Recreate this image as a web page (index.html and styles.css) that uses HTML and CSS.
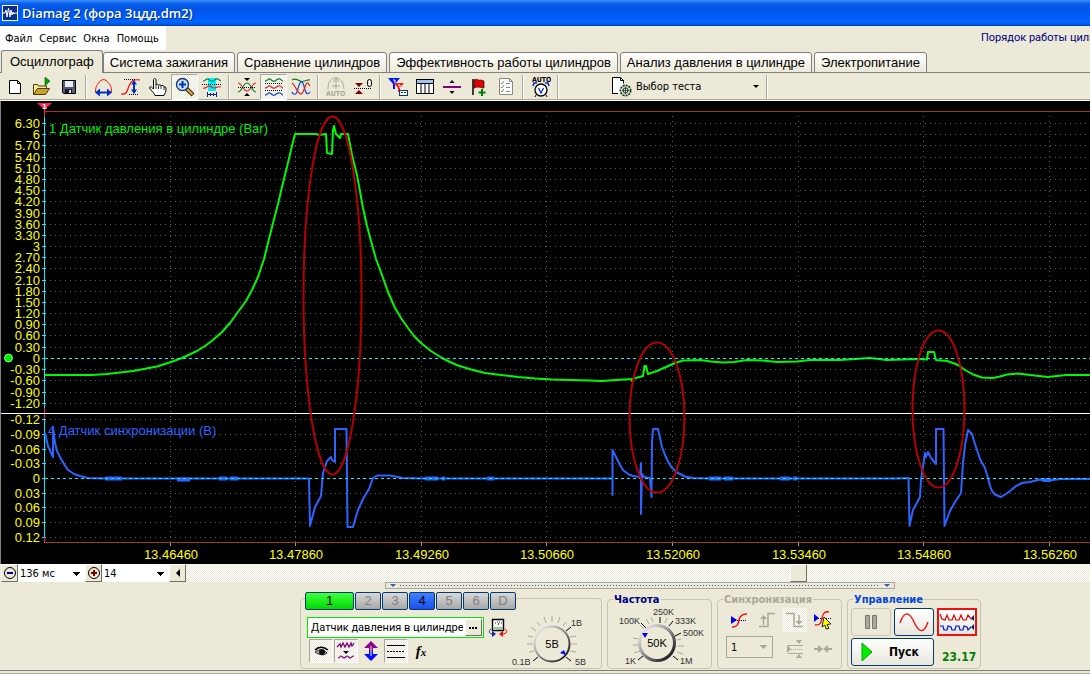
FILE: index.html
```html
<!DOCTYPE html>
<html lang="ru">
<head>
<meta charset="utf-8">
<title>Diamag 2 (фора 3цдд.dm2)</title>
<link rel="stylesheet" href="styles.css">
</head>
<body>
<div class="window">
  <header class="titlebar">
    <svg class="app-icon" width="16" height="16" viewBox="0 0 16 16"><rect width="16" height="16" fill="#fff"/><rect x="1" y="1" width="14" height="14" fill="#0a2f8c"/><path d="M1 8h2l1-3 1 7 1.500-9 1.500 9 1-7 1 5 1-3 1 2 1-1h2" fill="none" stroke="#fff"/></svg>
    <h1 class="title">Diamag 2 (фора 3цдд.dm2)</h1>
  </header>

  <div class="menurow">
    <nav class="menu">
      <button type="button">Файл</button>
      <button type="button">Сервис</button>
      <button type="button">Окна</button>
      <button type="button">Помощь</button>
    </nav>
    <span class="order">Порядок работы цилиндров</span>
  </div>

  <div class="tabs" role="tablist">
    <button type="button" role="tab" class="tab tab-on" aria-selected="true">Осциллограф</button>
    <button type="button" role="tab" class="tab">Система зажигания</button>
    <button type="button" role="tab" class="tab">Сравнение цилиндров</button>
    <button type="button" role="tab" class="tab">Эффективность работы цилиндров</button>
    <button type="button" role="tab" class="tab">Анализ давления в цилиндре</button>
    <button type="button" role="tab" class="tab">Электропитание</button>
  </div>

  <div class="toolbar">
    <button type="button" class="tool" aria-label="Новый"><svg width="20" height="20" viewBox="0 0 20 20"><path d="M4.500 3.500h8l3 3v10h-11z" fill="#fff" stroke="#000"/><path d="M12.500 3.500v3h3" fill="none" stroke="#000"/></svg></button>
    <button type="button" class="tool" aria-label="Открыть"><svg width="20" height="20" viewBox="0 0 20 20"><path d="M1.500 17.500v-10h4l1 1.500h8v3" fill="#f7e9a0" stroke="#4a3c00"/><path d="M1.500 17.500l4-6h12l-4 6z" fill="#c8a030" stroke="#4a3c00"/><path d="M13 0l5 4-5 5z" fill="#00a000" stroke="#006000" stroke-width=".6"/></svg></button>
    <button type="button" class="tool" aria-label="Сохранить"><svg width="20" height="20" viewBox="0 0 20 20"><path d="M3.500 3.500h13v13h-12l-1-1z" fill="#5a5a78" stroke="#000"/><path d="M6 4h8v6H6z" fill="#e4ecf8"/><path d="M6 12h7v4H6z" fill="#181828"/><path d="M10 13h2v3h-2z" fill="#ddd"/></svg></button>
    <span class="sep"></span>
    <button type="button" class="tool" aria-label="Интервал времени"><svg width="20" height="20" viewBox="0 0 20 20"><path d="M1.500 15c0-5 1.500-7 3-9 3-4.500 7-4.500 10 0 2 2 3 4 3 9" fill="none" stroke="#f00"/><path d="M4 15.500h11" stroke="#0030c0" stroke-width="2"/><path d="M1 15.500l5-4v8zM18 15.500l-5-4v8z" fill="#0030c0"/></svg></button>
    <button type="button" class="tool" aria-label="Амплитуда"><svg width="20" height="20" viewBox="0 0 20 20"><path d="M0 17c6 1 6-3 8-8s4-7 11-6" fill="none" stroke="#f00" stroke-width="1.200"/><path d="M3 2.500h12M8 17.500h10" stroke="#000" stroke-dasharray="1 1"/><path d="M13 5v11" stroke="#0030c0" stroke-width="2"/><path d="M13 3l-3 4.500h6zM13 17l-3-4.500h6z" fill="#0030c0"/></svg></button>
    <button type="button" class="tool" aria-label="Рука"><svg width="20" height="20" viewBox="0 0 20 20"><path d="M7 18.500c-1-3-4-5-5.500-7.500 0-2 2-1.500 4 1V3c0-2 2.500-2 2.500 0v5c0-1 2.500-1 2.500.5 0-1 2.500-1 2.500.5 0-1 3-1 3 1 2-.5 2 .5 2 2 0 3-1 4-2 6.500z" fill="#fff" stroke="#000"/><path d="M8 8v4M10.500 9v3M13 9v3M16 10v3" stroke="#000" stroke-width=".8"/></svg></button>
    <button type="button" class="tool tool-on" aria-label="Масштаб"><svg width="20" height="20" viewBox="0 0 20 20"><path d="M11 11l7 7" stroke="#402000" stroke-width="4"/><path d="M12 12l5.500 5.500" stroke="#e0b050" stroke-width="2"/><circle cx="7.500" cy="7.500" r="6" fill="#c8e4ff" stroke="#183878" stroke-width="1.400"/><path d="M4 7.500h7M7.500 4v7" stroke="#0030b0" stroke-width="2"/></svg></button>
    <button type="button" class="tool" aria-label="Участок"><svg width="20" height="20" viewBox="0 0 20 20"><path d="M6 1h8v13H6z" fill="#00f0ff"/><path d="M1 4c3 0 3-3 5-2s3 3 5 2 3-3 5-2 2 2 3 2" fill="none" stroke="#008030" stroke-width="1.200"/><path d="M1 11c3 1 4-2 6-2s3 2 5 2 4-2 7-1" fill="none" stroke="#e02020" stroke-width="1.200"/><path d="M0 7.500h20" stroke="#000" stroke-dasharray="1 1"/><path d="M6 17.500h8M5.500 15v5M14.500 15v5M8.500 16v3M11.500 16v3" stroke="#102080"/></svg></button>
    <span class="sep"></span>
    <button type="button" class="tool" aria-label="Совмещение"><svg width="20" height="20" viewBox="0 0 20 20"><path d="M1 6c4 0 5 8 9 8s5-8 9-8" fill="none" stroke="#e02020" stroke-width="1.200"/><path d="M1 15c4 0 5-9 9-9s5 9 9 9" fill="none" stroke="#008020" stroke-width="1.200"/><path d="M1 10.500h18" stroke="#000" stroke-dasharray="1 1"/><path d="M7 1h6l-3 3zM7 19h6l-3-3z" fill="#000"/></svg></button>
    <button type="button" class="tool tool-on" aria-label="Раздельно"><svg width="20" height="20" viewBox="0 0 20 20"><path d="M1 4c3 0 3-3 5-2s3 3 5 2 3-3 5-2 2 2 3 2" fill="none" stroke="#008020" stroke-width="1.300"/><path d="M1 11c3 0 3-3 5-2s3 3 5 2 3-3 5-2 2 2 3 2" fill="none" stroke="#e02020" stroke-width="1.300"/><path d="M1 18c3 0 3-3 5-2s3 3 5 2 3-3 5-2 2 2 3 2" fill="none" stroke="#1040e0" stroke-width="1.300"/><path d="M1 6.500h18M1 13.500h18" stroke="#000" stroke-dasharray="1 1"/></svg></button>
    <button type="button" class="tool" aria-label="Вместе"><svg width="20" height="20" viewBox="0 0 20 20"><path d="M1 3c3-2 5-1 8 1s7-2 10-1" fill="none" stroke="#008020" stroke-width="1.200"/><path d="M1 15c1 3 4 3 5 0s2-9 4-10 3 4 4 8 3 5 5 2" fill="none" stroke="#1040e0" stroke-width="1.200"/><path d="M1 6c2 1 3 4 5 7s4 6 6 2 3-10 5-9l2 3" fill="none" stroke="#e02020" stroke-width="1.200"/></svg></button>
    <span class="sep"></span>
    <button type="button" class="tool" aria-label="Авто" disabled><svg width="20" height="20" viewBox="0 0 20 20"><path d="M2 12C2-3 17-3 18 12M7 5l3-4 3 4M10 2v10M6 9h8" fill="none" stroke="#aca899"/><text x="0" y="19" class="icon-text icon-off">AUTO</text></svg></button>
    <button type="button" class="tool" aria-label="Ноль"><svg width="20" height="20" viewBox="0 0 20 20"><path d="M2 6h8l-4 4zM2 17h8l-4-4z" fill="#800000"/><path d="M1 11.500h18" stroke="#000" stroke-dasharray="1 1"/><rect x="14.500" y="2.500" width="4" height="7" rx="2" fill="none" stroke="#000"/></svg></button>
    <span class="sep"></span>
    <button type="button" class="tool" aria-label="Курсоры"><svg width="20" height="20" viewBox="0 0 20 20"><path d="M0 1h12l-5 6v5H5V7z" fill="#0018ff"/><path d="M6 6h10l-4 5v4h-2v-4z" fill="#f02020"/><path d="M5 3h2v3M10 8h2v3" stroke="#fff" fill="none"/><rect x="11.500" y="13.500" width="8" height="5" fill="#fff" stroke="#103080"/><path d="M13 15.500h5" stroke="#103080" stroke-dasharray="2 1"/></svg></button>
    <button type="button" class="tool" aria-label="Таблица"><svg width="20" height="20" viewBox="0 0 20 20"><rect x="1.500" y="2.500" width="17" height="14" fill="#fff" stroke="#000"/><path d="M2 3h16v3H2z" fill="#a0c4f0"/><path d="M1.500 6.500h17M6 6.500v10M10 6.500v10M14 6.500v10" stroke="#000"/></svg></button>
    <button type="button" class="tool" aria-label="Разделитель"><svg width="20" height="20" viewBox="0 0 20 20"><path d="M1 10h18" stroke="#800080" stroke-width="2"/><path d="M7.500 6h5L10 3zM7.500 14h5L10 17z" fill="#000"/></svg></button>
    <button type="button" class="tool" aria-label="Маркер"><svg width="20" height="20" viewBox="0 0 20 20"><path d="M4 2v16" stroke="#000" stroke-width="1.500"/><path d="M5 3c3-2 4 1 7 0l3 1v7c-3 0-5-2-10 0z" fill="#e00000" stroke="#400000" stroke-width=".7"/><path d="M13 12v7M9.500 15.500h7" stroke="#008000" stroke-width="2"/></svg></button>
    <button type="button" class="tool" aria-label="Список" disabled><svg width="20" height="20" viewBox="0 0 20 20"><path d="M3.500 1.500h10l3 3v13h-13z" fill="#fff" stroke="#8c8a80"/><path d="M13.500 1.500v3h3M5 6l1 1 2-3M5 10l1 1 2-3M5 14l1 1 2-3M10 6.500h4M10 10.500h4M10 14.500h4" fill="none" stroke="#8c8a80"/></svg></button>
    <span class="sep"></span>
    <button type="button" class="tool" aria-label="Автоизмерение"><svg width="20" height="22" viewBox="0 0 20 22"><text x="1" y="6" class="icon-text">AUTO</text><path d="M2 10l1-3h3M18 10l-1-3h-3" stroke="#0030c0" stroke-width="1.500" fill="none"/><circle cx="10" cy="14" r="6" fill="#fff" stroke="#000" stroke-width="1.300"/><path d="M5 19l-1 2M15 19l1 2" stroke="#000"/><path d="M7.500 12l2.500 5 2.500-5" fill="none" stroke="#0030e0" stroke-width="1.300"/></svg></button>
    <span class="sep"></span>
    <button type="button" class="testpick" aria-haspopup="listbox"><svg width="22" height="20" viewBox="0 0 22 20"><path d="M1.500.5h8l3 3v13h-11z" fill="#fff"/><path d="M7 16.500H1.500V.5h8l3 3v3M9.500.5v3h3" fill="none" stroke="#000"/><circle cx="14.500" cy="13.500" r="5.200" fill="#c8dcc8" stroke="#203020" stroke-width="1.600" stroke-dasharray="2 1"/><circle cx="14.500" cy="13.500" r="2.500" fill="#f0f4f0" stroke="#203020"/><path d="M14.500 10v7M11 13.500h7" stroke="#203020" stroke-width=".8"/></svg><span class="testname">Выбор теста</span><span class="caret"></span></button>
    <span class="sep"></span>
  </div>

  <main class="scope">
    <svg class="chart" viewBox="0 101 1090 463" role="img" aria-label="Осциллограмма">
      <g fill="none" shape-rendering="crispEdges">
        <path class="grid" d="M50 123.500H1090M50 134.500H1090M50 145.500H1090M50 157.500H1090M50 168.500H1090M50 179.500H1090M50 190.500H1090M50 201.500H1090M50 213.500H1090M50 224.500H1090M50 235.500H1090M50 246.500H1090M50 257.500H1090M50 268.500H1090M50 280.500H1090M50 291.500H1090M50 302.500H1090M50 313.500H1090M50 324.500H1090M50 335.500H1090M50 347.500H1090M50 369.500H1090M50 380.500H1090M50 392.500H1090M50 403.500H1090M50 419.500H1090M50 434.500H1090M50 449.500H1090M50 463.500H1090M50 493.500H1090M50 507.500H1090M50 522.500H1090M50 537.500H1090"/>
        <path class="grid" d="M170.500 116V542M295.500 116V542M421.500 116V542M546.500 116V542M672.500 116V542M798.500 116V542M923.500 116V542M1049.500 116V542"/>
        <path stroke="#a03c08" d="M44 111.500H1090M44 542.500H1090"/>
        <path stroke="#999" d="M170.500 543v3M295.500 543v3M421.500 543v3M546.500 543v3M672.500 543v3M798.500 543v3M923.500 543v3M1049.500 543v3"/>
        <path stroke="#00f0ff" d="M44.500 117V538M42 123.500h4M42 134.500h4M42 145.500h4M42 157.500h4M42 168.500h4M42 179.500h4M42 190.500h4M42 201.500h4M42 213.500h4M42 224.500h4M42 235.500h4M42 246.500h4M42 257.500h4M42 268.500h4M42 280.500h4M42 291.500h4M42 302.500h4M42 313.500h4M42 324.500h4M42 335.500h4M42 347.500h4M42 358.500h4M42 369.500h4M42 380.500h4M42 392.500h4M42 403.500h4M42 419.500h4M42 434.500h4M42 449.500h4M42 463.500h4M42 478.500h4M42 493.500h4M42 507.500h4M42 522.500h4M42 537.500h4"/>
        <path stroke="#ff1c58" d="M44.500 108V117M44.500 408V419M44.500 537V543"/>
        <path stroke="#fff" d="M0 413.500H1090"/>
        <path stroke="#808080" d="M.5 101V564"/>
      </g>
      <path d="M37 103h15l-7.500 7z" fill="#ff2058"/>
      <text x="42" y="109" class="mark">1</text>
      <circle cx="8.500" cy="358" r="4" fill="#00f000" stroke="#b0ffb0" stroke-width=".8"/>
      <g class="ylab">
        <text x="40" y="128">6.30</text><text x="40" y="139">6</text><text x="40" y="150">5.70</text><text x="40" y="162">5.40</text><text x="40" y="173">5.10</text><text x="40" y="184">4.80</text><text x="40" y="195">4.50</text><text x="40" y="206">4.20</text><text x="40" y="218">3.90</text><text x="40" y="229">3.60</text><text x="40" y="240">3.30</text><text x="40" y="251">3</text><text x="40" y="262">2.70</text><text x="40" y="273">2.40</text><text x="40" y="285">2.10</text><text x="40" y="296">1.80</text><text x="40" y="307">1.50</text><text x="40" y="318">1.20</text><text x="40" y="329">0.90</text><text x="40" y="340">0.60</text><text x="40" y="352">0.30</text><text x="40" y="363">0</text><text x="40" y="374">-0.30</text><text x="40" y="385">-0.60</text><text x="40" y="397">-0.90</text><text x="40" y="408">-1.20</text>
        <text x="40" y="424">-0.12</text><text x="40" y="439">-0.09</text><text x="40" y="454">-0.06</text><text x="40" y="468">-0.03</text><text x="40" y="483">0</text><text x="40" y="498">0.03</text><text x="40" y="512">0.06</text><text x="40" y="527">0.09</text><text x="40" y="542">0.12</text>
      </g>
      <g class="xlab">
        <text x="171" y="559">13.46460</text><text x="296" y="559">13.47860</text><text x="422" y="559">13.49260</text><text x="547" y="559">13.50660</text><text x="673" y="559">13.52060</text><text x="799" y="559">13.53460</text><text x="924" y="559">13.54860</text><text x="1050" y="559">13.56260</text>
      </g>
      <text x="49" y="133" class="chan chan-a">1 Датчик давления в цилиндре (Bar)</text>
      <text x="48" y="435" class="chan chan-b">4 Датчик синхронизации (В)</text>
      <path class="wave wave-a" d="M45 375H92L107 374 133 371 157 366.500 171 362 182 358 197 351 205 346 213 340 222 332 230 323 238 312 246 301 252 290 258 277 264 259 268 243 273 223 278 204 282 187 287 167 291 150 295 134H316L319 135 326 134 327 153 332 154 333 130 334 126 336 134 340 138 341 134H348L352 155 357 175 363 208 367 226 371 241 376 259 382 275 388 292 395 308 401 318 408 328 414 336 421 343 431 351 442 358 450 362 458 365.500 471 369.500 485 373 501 375 518 377 535 378.500 552 379.500 590 380.500 602 381 616 380 632 379V381 379L643 376 644.500 366H646L648 374 657 371 666 367 675 363 683 360.500 700 360 711 361.500 723 362.500 734 362 747 360 763 360.500 777 362 797 361.500 810 360 840 360 870 358 887 360 918 359 927 359.500 928 352H934L936 360 947 361 953 363 958 365 965 370 973 374.500 982 377.500 993 378 1000 376.500 1007 374.500 1018 373.500 1030 375 1048 377 1066 375 1090 375"/>
      <path class="wave wave-b" d="M45 433L48 446 53 457V427L55 443 57 451 60 457 64 464 68 470 74 474 80 476 88 478 105 478.500H309L310 526 315 507 321 496 323 473 327 461 331 457 332 460 335 462V429H346.500L347.500 527H353L358 510 363 499 369 489 373 478 377 475.500H390L403 478 425 478.500H612.500V495 450L617 459 620 465 623 470 628 474 633 476 640 477 641 463V514L642 474 644 477 650 478 651.500 497 652 443 653 429H658L662 447 665 455 668 461.500 672 468 677 472.500 685 476.500 693 478 709 478.500H897L908.500 478 909.500 526 913 510 920 497 921 480 925 453 926 457 928 452 931 458 936 464V429H943.500L944.500 526 950 511 955 502 961 493 963 463 965 445 968 430 972 434 974 441 977 450 980 459 985 468 988 478 990 486 992 491 995 494.500 1001 497 1006 494 1010 491 1016 486 1022 483 1030 482 1040 479.500 1045 481 1060 479H1090"/>
      <path class="noise" d="M105 478.500h17M177 479.500h13M219 478.500h8M230 478.500h8M425 478.500h13M442 478.500h3M487 478.500h7M709 478.500h12M724 478.500h9M780 478.500h10M793 478.500h4M1043 480h8"/>
      <path class="zero" d="M45 358.500H1090M45 478.500H1090"/>
      <g class="callout"><ellipse cx="332.500" cy="295.500" rx="29" ry="179"/><ellipse cx="657" cy="417.500" rx="27.500" ry="75"/><ellipse cx="938.500" cy="409" rx="26" ry="78.500"/></g>
    </svg>
  </main>

  <div class="scrollrow">
    <button type="button" class="mini" aria-label="Уменьшить"><svg width="16" height="16" viewBox="0 0 16 16"><circle cx="8" cy="8" r="5.500" fill="none" stroke="#000"/><path d="M5 8h6" stroke="#000080" stroke-width="2"/></svg></button>
    <select class="drop range" aria-label="Развёртка"><option>136 мс</option></select>
    <button type="button" class="mini" aria-label="Увеличить"><svg width="16" height="16" viewBox="0 0 16 16"><circle cx="8" cy="8" r="5.500" fill="none" stroke="#000"/><path d="M5 8h6M8 5v6" stroke="#800000" stroke-width="2"/></svg></button>
    <select class="drop range" aria-label="Масштаб"><option>14</option></select>
    <button type="button" class="mini" aria-label="Влево"><svg width="16" height="16" viewBox="0 0 16 16"><path d="M10 4v8L6 8z" fill="#000"/></svg></button>
    <div class="track"><span class="thumb"></span></div>
  </div>

  <div class="splitter"><span class="down"></span><span class="dots"></span><span class="down"></span></div>

  <div class="panel">
    <div class="group channel">
      <div class="chanrow">
        <div class="channels">
          <button type="button" class="ch ch-one">1</button><button type="button" class="ch">2</button><button type="button" class="ch">3</button><button type="button" class="ch ch-four">4</button><button type="button" class="ch">5</button><button type="button" class="ch">6</button><button type="button" class="ch">D</button>
        </div>
        <div class="sensor">
          <div class="sensorbox"><input type="text" aria-label="Датчик" value="Датчик давления в цилиндре"><button type="button" class="more" aria-label="Выбрать"><svg width="9" height="3" viewBox="0 0 9 3"><path d="M0 1h2v2H0zM3 1h2v2H3zM6 1h2v2H6z"/></svg></button></div>
          <svg width="20" height="20" viewBox="0 0 20 20"><path d="M4.500 1.500h11v11h-11z" fill="#fff" stroke="#000" stroke-width="1.400"/><path d="M5 9h10v3H5z" fill="#a0c8a0"/><path d="M7 5h1M9 4h1M11 4h1M13 5h1M10 7l1-2" fill="none" stroke="#000" stroke-width=".8"/><path d="M3 11c-3 2-2 5 2 5" fill="none" stroke="#1020a0"/><path d="M4 13l4 3-4 3z" fill="#1020a0"/><path d="M17 11c3 2 2 5-3 5" fill="none" stroke="#f00"/><path d="M15 13l-4 3 4 3z" fill="#f00"/></svg>
        </div>
        <div class="chtools">
          <button type="button" class="tool tool-on" aria-label="Показать"><svg width="20" height="20" viewBox="0 0 20 20"><path d="M4 9c3-3 8-4 13 0" fill="none" stroke="#000" stroke-width="1.600"/><path d="M4 11c3-3 9-3 12 1-3 3-8 2-12-1z" fill="#aaa" stroke="#333"/><circle cx="11" cy="11" r="3" fill="#111"/></svg></button>
          <button type="button" class="tool tool-on" aria-label="Фильтр"><svg width="20" height="20" viewBox="0 0 20 20"><path d="M1 6l3-3 1 3 2-4 2 4 2-4 2 4 2-4 1 3 2-3" fill="none" stroke="#800080" stroke-width="1.300"/><path d="M7 10h6l-3 3z" fill="#000"/><path d="M2 17c2 0 2-2 3-2s2 2 3 2 2-2 3-2 2 2 3 2 2-2 4-2" fill="none" stroke="#800080" stroke-width="1.200"/></svg></button>
          <button type="button" class="tool" aria-label="Инвертировать"><svg width="20" height="20" viewBox="0 0 20 20"><path d="M10 0l7 7h-5v3H8V7H3z" fill="#900090"/><path d="M10 20l7-7h-5v-3H8v3H3z" fill="#0010ff"/><path d="M10 5v10" stroke="#ece9d8"/></svg></button>
          <button type="button" class="tool tool-on" aria-label="Линии"><svg width="20" height="20" viewBox="0 0 20 20"><path d="M1 4.500h18M1 16.500h18" stroke="#000"/><path d="M1 10.500h18" stroke="#000" stroke-dasharray="2 1"/></svg></button>
          <button type="button" class="tool" aria-label="Формула"><span class="fx">f<small>x</small></span></button>
        </div>
      </div>
      <svg class="knob" width="84" height="56" viewBox="0 0 84 56">
        <defs>
          <linearGradient id="rim" x1="0" y1="0" x2="1" y2="1"><stop offset="0" stop-color="#fff"/><stop offset=".5" stop-color="#888"/><stop offset="1" stop-color="#000"/></linearGradient>
        </defs>
        <path stroke="#aca899" d="M24 26l-5-1M24 33h-6M25 40l-5 1M27 20l-5-4M31 15l-3-4M37 12l-2-6M43 11V5M49 12l2-6M54 15l3-4M61 26l6-1M62 33h6M61 40l6 1"/>
        <path stroke="#000" d="M57 20l5-4M57 46l5 4M29 46l-5 4"/>
        <circle cx="43" cy="33" r="17.500" fill="#ece9d8" stroke="url(#rim)" stroke-width="2"/>
        <text x="43" y="37" class="knob-value">5В</text>
        <path d="M51 42l4-3 2 5z" fill="#00f"/>
        <text x="62" y="15" class="knob-text">1В</text><text x="3" y="54" class="knob-text">0.1В</text><text x="66" y="54" class="knob-text">5В</text>
      </svg>
    </div>

    <fieldset class="group freq">
      <legend>Частота</legend>
      <svg class="knob" width="98" height="62" viewBox="0 0 98 62">
        <path stroke="#aca899" d="M28 33l-6-1M28 39h-6M29 45l-6 2M33 23l-4-4M38 18l-3-5M42 16l-2-5M54 17l2-5M67 40h6M66 46l6 2M66 34l4-1"/>
        <path stroke="#000" d="M35 22l-5-5M49 17v-6M58 20l4-5M64 30l6-3M62 50l5 4M32 50l-5 4"/>
        <circle cx="46" cy="37" r="17.500" fill="#ece9d8" stroke="url(#rim)" stroke-width="3"/>
        <text x="46" y="41" class="knob-value">50K</text>
        <path d="M31 27h6l-3 5z" fill="#00f"/>
        <text x="42" y="9" class="knob-text">250K</text><text x="8" y="18" class="knob-text">100K</text><text x="64" y="18" class="knob-text">333K</text><text x="72" y="30" class="knob-text">500K</text><text x="14" y="58" class="knob-text">1K</text><text x="69" y="58" class="knob-text">1M</text>
      </svg>
    </fieldset>

    <fieldset class="group sync">
      <legend>Синхронизация</legend>
      <div class="syncgrid">
        <button type="button" class="tool" aria-label="Уровень"><svg width="20" height="20" viewBox="0 0 20 20"><path d="M2 6v8l6-4z" fill="#00f"/><path d="M2 10.500h16" stroke="#008" stroke-dasharray="1 1"/><path d="M3 17c5 0 6-2 7-7s4-6 8-6" fill="none" stroke="#f00" stroke-width="1.300"/></svg></button>
        <button type="button" class="tool" aria-label="Фронт" disabled><svg width="20" height="20" viewBox="0 0 20 20"><path d="M2 16.500h9v-13h7M6.500 15V7" fill="none" stroke="#aca899" stroke-width="1.500"/><path d="M3 9h7L6.500 5z" fill="#aca899"/></svg></button>
        <button type="button" class="tool tool-checked" aria-label="Спад" disabled><svg width="20" height="20" viewBox="0 0 20 20"><path d="M1 3.500h8v13h9M14 5v8" fill="none" stroke="#aca899" stroke-width="1.500"/><path d="M10.500 11h7L14 15z" fill="#aca899"/></svg></button>
        <button type="button" class="tool" aria-label="Захват"><svg width="20" height="20" viewBox="0 0 20 20"><path d="M1 4v8l5-4z" fill="#00f"/><path d="M1 8.500h18" stroke="#008" stroke-dasharray="1 1"/><path d="M2 15c6 0 6-2 7-7s3-7 7-6" fill="none" stroke="#f00" stroke-width="1.300"/><path d="M11 7l7 7-4 .5 2 4-3 .5-1-4-3 2z" fill="#ff0" stroke="#000" stroke-width=".8"/></svg></button>
        <select class="drop syncsel" aria-label="Канал синхронизации" disabled><option>1</option></select>
        <button type="button" class="tool" aria-label="Порог" disabled><svg width="20" height="20" viewBox="0 0 20 20"><path d="M2 7v8l4-4z" fill="#aca899"/><path d="M3 7.500h15M3 15.500h15" stroke="#aca899"/><path d="M6 11.500h12" stroke="#aca899" stroke-dasharray="1 1"/><path d="M11 2h6l-3 4zM11 20h6l-3-4z" fill="#aca899"/></svg></button>
        <button type="button" class="tool" aria-label="К центру" disabled><svg width="20" height="20" viewBox="0 0 20 20"><path d="M1 11h5M14 11h5" stroke="#aca899" stroke-width="2"/><path d="M5 7l5 4-5 4zM15 7l-5 4 5 4z" fill="#aca899"/></svg></button>
      </div>
    </fieldset>

    <fieldset class="group control">
      <legend>Управление</legend>
      <div class="ctlgrid">
        <button type="button" class="xp xp-off" aria-label="Пауза" disabled><svg width="20" height="20" viewBox="0 0 20 20"><path d="M4.500 3.500h4v13h-4zM11.500 3.500h4v13h-4z" fill="#aca899" stroke="#777"/></svg></button>
        <button type="button" class="xp" aria-label="Синус"><svg width="32" height="20" viewBox="0 0 32 20"><path d="M2 11C6-1 11-1 16 10s10 12 14 0" fill="none" stroke="#f00" stroke-width="1.300"/></svg></button>
        <button type="button" class="xp xp-red" aria-label="Запись"><svg width="36" height="22" viewBox="0 0 36 22"><path d="M1 3l2 5 3 1 2-5 2 5 3 0 2-5 2 5 3 0 2-5 2 5 3 0 2-5 3 4 2 0" fill="none" stroke="#e00000" stroke-width="1.200"/><path d="M1 15h3l1 4 3 0 1-4 3 1 1 3 3 0 1-4 3 0 1 4 3 0 1-4 3 1 1 3 3-3" fill="none" stroke="#0010e0" stroke-width="1.200"/><path d="M35 4v6l-3-3zM35 13v6l-3-3z" fill="#002060"/></svg></button>
        <button type="button" class="xp start"><svg width="12" height="20" viewBox="0 0 12 20"><path d="M1 1l10 9-10 9z" fill="#00f000" stroke="#00a000"/></svg><span>Пуск</span></button>
        <output class="voltage">23.17</output>
      </div>
    </fieldset>
  </div>
  <footer class="status"></footer>
</div>
</body>
</html>
```
FILE: styles.css
```css
* { box-sizing: border-box; }

body {
  margin: 0;
  background: #ece9d8;
  color: #000;
  font: 11px/13px "DejaVu Sans Condensed", "Noto Sans", sans-serif;
  overflow: hidden;
}

button, select, input { font: inherit; color: inherit; margin: 0; }
button { padding: 0; border: 0; background: none; }
svg { display: block; flex: none; }

.window { display: flex; flex-direction: column; min-height: 100vh; }

.titlebar {
  display: flex;
  align-items: center;
  gap: 4px;
  height: 26px;
  padding: 0 2px;
  background: linear-gradient(#3f98ff 0, #2a80f8 1px, #0a5ce8 4px, #0054e6 10px, #005cf8 17px, #0068ff 22px, #0058e8 24px, #0040c0 26px);
}
.title {
  margin: 0;
  color: #fff;
  font: 600 13px/20px "Open Sans", "Noto Sans", sans-serif;
  text-shadow: 1px 1px #003090;
}

.menurow { display: flex; justify-content: space-between; height: 24px; }
.menu { display: flex; gap: 7px; padding: 0 7px 0 5px; background: #fff; }
.order {
  width: 109px;
  line-height: 24px;
  color: #000080;
  font-family: Roboto, sans-serif;
  white-space: nowrap;
  overflow: hidden;
}

.tabs {
  display: flex;
  align-items: flex-end;
  gap: 2px;
  height: 23px;
  padding-left: 1px;
  box-shadow: inset 0 -1px #808080;
}
.tab {
  height: 21px;
  padding: 0 6px;
  border: 1px solid #808080;
  border-radius: 3px 3px 0 0;
  background: linear-gradient(#fff, #ece9d8);
  font: 13px/18px "Liberation Sans", Arial, sans-serif;
  white-space: nowrap;
}
.tab-on { height: 23px; margin-right: -2px; padding: 0 8px; border-bottom: 0; background: #ece9d8; }

.toolbar {
  display: flex;
  align-items: center;
  height: 28px;
  padding-left: 1px;
  border-bottom: 1px solid #fff;
  box-shadow: inset 0 -1px #aca899;
}
.tool { display: flex; align-items: center; justify-content: center; width: 27px; height: 26px; }
.tool-on, .tool-checked, .track { background: repeating-conic-gradient(#fff 0 25%, #ece9d8 0 50%) 0 0 / 2px 2px; }
.tool-on { border: 1px solid; border-color: #aca899 #fff #fff #aca899; }
.sep { width: 8px; height: 24px; background: linear-gradient(90deg, #aca899 50%, #fff 50%) center / 2px 24px no-repeat; }
.icon-text { font: bold 7px "DejaVu Sans Condensed", sans-serif; }
.icon-off { fill: #aca899; }
.testpick { display: flex; align-items: center; gap: 3px; width: 152px; margin-left: 49px; padding-right: 4px; }
.testname { flex: 1; text-align: left; }
.caret, .down { border: 3px solid transparent; border-bottom: 0; border-top-color: #000; }

.scope { background: #000; }
.chart { width: 100%; height: auto; }
.grid { stroke: #5c5c5c; stroke-dasharray: 1 4; }
.zero { stroke: #00f0ff; stroke-dasharray: 3 3; shape-rendering: crispEdges; }
.wave { fill: none; stroke-width: 2; stroke-linejoin: round; }
.wave-a { stroke: #00f800; }
.wave-b { stroke: #2c64ff; }
.noise { stroke: #2c64ff; stroke-width: 4; }
.callout { fill: none; stroke: #b40000; stroke-width: 2; }
.ylab, .xlab { fill: #ff0; font: 13px "Liberation Sans", Arial, sans-serif; }
.ylab { text-anchor: end; }
.xlab { text-anchor: middle; }
.chan { font: 13px "Liberation Sans", Arial, sans-serif; }
.chan-a { fill: #00f000; }
.chan-b { fill: #2c64ff; }
.mark { fill: #fff; font: bold 7px "DejaVu Sans", sans-serif; }

.scrollrow { display: flex; height: 18px; padding-left: 1px; }
.mini {
  display: flex;
  align-items: center;
  justify-content: center;
  width: 17px;
  border: 1px solid;
  border-color: #fff #716f64 #716f64 #fff;
  background: #ece9d8;
}
.drop {
  --arrow: #000;
  appearance: none;
  border: 0;
  border-radius: 0;
  background-image: conic-gradient(from -45deg at 50% 100%, var(--arrow) 90deg, transparent 90deg);
  background-repeat: no-repeat;
  background-position: right 4px center;
  background-size: 8px 4px;
  transition: none;
}
.drop {
  background-image: linear-gradient(var(--arrow), var(--arrow)), linear-gradient(var(--arrow), var(--arrow)), linear-gradient(var(--arrow), var(--arrow)), linear-gradient(var(--arrow), var(--arrow));
  background-size: 7px 1px, 5px 1px, 3px 1px, 1px 1px;
  background-position: right 5px top 8px, right 6px top 9px, right 7px top 10px, right 8px top 11px;
}
.range { width: 67px; padding: 0 2px; background-color: #fff; }
.track { display: flex; flex: 1; }
.thumb {
  width: 17px;
  margin-left: 604px;
  border: 1px solid;
  border-color: #fff #716f64 #716f64 #fff;
  background: #ece9d8;
}

.splitter {
  display: flex;
  align-items: center;
  gap: 4px;
  width: 510px;
  height: 7px;
  margin-left: 385px;
  padding: 0 4px;
  border: 1px solid #aca899;
}
.splitter .down { border-top-color: #2860c8; }
.dots { flex: 1; height: 1px; background: repeating-linear-gradient(90deg, #2860c8 0 1px, transparent 1px 3px); }

.panel { display: flex; align-items: stretch; gap: 5px; height: 81px; padding: 4px 0 1px 300px; }
.group { min-width: 0; margin: 0; padding: 0; border: 1px solid #c8c4b0; border-radius: 4px; }
.group legend { margin-left: 5px; padding: 0 1px; font-weight: bold; }
.channel { display: flex; align-items: flex-end; justify-content: space-between; width: 302px; margin-top: 5px; padding: 0 8px 1px 4px; }
.chanrow { display: flex; flex-direction: column; flex: none; width: 204px; height: 75px; }
.channels { display: flex; gap: 1px; }
.ch {
  flex: none;
  width: 26px;
  height: 18px;
  border: 1px solid #003c74;
  border-radius: 2px;
  background: linear-gradient(#d8d8d8, #a8a8a8);
  color: #808080;
  font: 13px/16px "Liberation Sans", Arial, sans-serif;
}
.ch-one { width: 49px; background: linear-gradient(#40ff40, #00d800); color: #000; }
.ch-four { background: linear-gradient(#4080ff, #1850f0); color: #000; }
.sensor { display: flex; align-items: center; gap: 4px; margin: 7px 0 1px 2px; }
.sensorbox { display: flex; align-items: center; flex: none; width: 177px; height: 21px; padding: 1px; border: 1px solid #00e800; background: #fff; }
.sensorbox input { flex: 1; min-width: 0; padding: 0 2px; border: 0; background: none; font-family: Roboto, sans-serif; }
.more { display: flex; align-items: center; justify-content: center; width: 17px; height: 17px; border: 1px solid; border-color: #fff #716f64 #716f64 #fff; background: #ece9d8; }
.chtools { display: flex; gap: 1px; margin-left: 4px; }
.chtools .tool { width: 24px; height: 24px; }
.fx { font: italic bold 15px/20px "Liberation Serif", serif; }
.fx small { font-size: 11px; }
.knob-text { fill: #333; font: 9px "Liberation Sans", Arial, sans-serif; }
.knob-value { text-anchor: middle; font: 11px "Liberation Sans", Arial, sans-serif; }

.freq { width: 105px; }
.freq legend { color: #000080; }
.freq .knob { margin-left: 3px; }

.sync { width: 125px; }
.sync legend { color: #aca899; }
.syncgrid { display: grid; grid-template-columns: repeat(4, 25px); gap: 4px 3px; padding: 2px 0 0 8px; }
.syncgrid .tool { width: 25px; height: 24px; }
.syncsel {
  --arrow: #aca899;
  grid-column: span 2;
  width: 47px;
  height: 22px;
  padding: 0 4px;
  border: 1px solid #aca899;
  background-color: transparent;
  color: #000;
  opacity: 1;
}

.control { width: 134px; }
.control legend { color: #0046d5; }
.ctlgrid { display: grid; grid-template-columns: repeat(3, 40px); gap: 2px 3px; padding: 2px 0 0 3px; }
.xp {
  display: flex;
  align-items: center;
  justify-content: center;
  height: 28px;
  border: 1px solid #003c74;
  border-radius: 3px;
  background: linear-gradient(#fff, #e8e6dc);
}
.xp-off { border-color: #c9c7ba; background: #ece9d8; }
.xp-red { border: 2px solid #f01010; border-radius: 0; }
.start { grid-column: span 2; justify-content: flex-start; gap: 16px; padding-left: 9px; font-weight: bold; }
.start span { font-size: 12px; }
.voltage { align-self: center; padding: 10px 0 0 5px; color: #008000; font-size: 12px; font-weight: bold; }

.status { flex: 1; border-top: 1px solid #808080; box-shadow: inset 0 -1px #aca899; }
```
